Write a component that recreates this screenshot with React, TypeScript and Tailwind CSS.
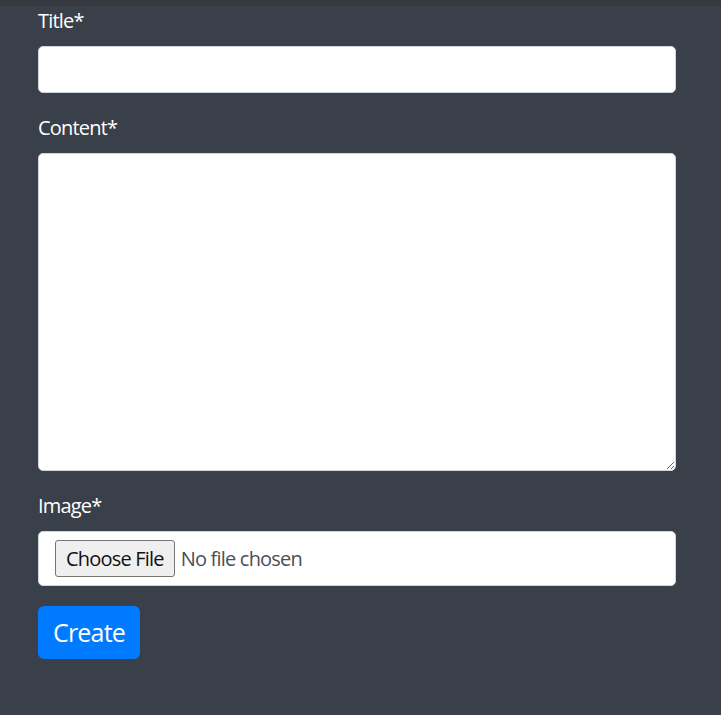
import React from "react";

export default function App() {
  return (
    <div
      className="min-h-screen w-full bg-[#3a4049] text-[20px] tracking-[-0.04em]"
      style={{ fontFamily: '"Open Sans", "Noto Sans", sans-serif' }}
    >
      <div className="h-[6px] w-full bg-[#343a40]" />
      <form className="ml-[38px] w-[638px]">
        <div className="mb-[20px]">
          <label className="block mb-[10px] leading-[30px] text-white">Title*</label>
          <input
            type="text"
            className="block w-full h-[47px] rounded-[5px] border border-[#ced4da] bg-white px-[15px] text-[#495057]"
          />
        </div>
        <div className="mb-[20px]">
          <label className="block mb-[10px] leading-[30px] text-white">Content*</label>
          <textarea className="block w-full h-[318px] rounded-[5px] border border-[#ced4da] bg-white px-[15px] py-[8px] text-[#495057]" />
        </div>
        <div className="mb-[20px]">
          <label className="block mb-[10px] leading-[30px] text-white">Image*</label>
          <div className="flex items-center h-[55px] rounded-[5px] border border-[#ced4da] bg-white pl-[16px]">
            <input
              type="file"
              className="text-[20px] text-[#495057] file:mr-[6px] file:h-[37px] file:px-[10px] file:border file:border-[#767676] file:rounded-[3px] file:bg-[#efefef] file:text-[#111]"
            />
          </div>
        </div>
        <button
          type="button"
          className="h-[53px] rounded-[6px] bg-[#007bff] px-[15px] text-[25px] text-white"
        >
          Create
        </button>
      </form>
    </div>
  );
}
